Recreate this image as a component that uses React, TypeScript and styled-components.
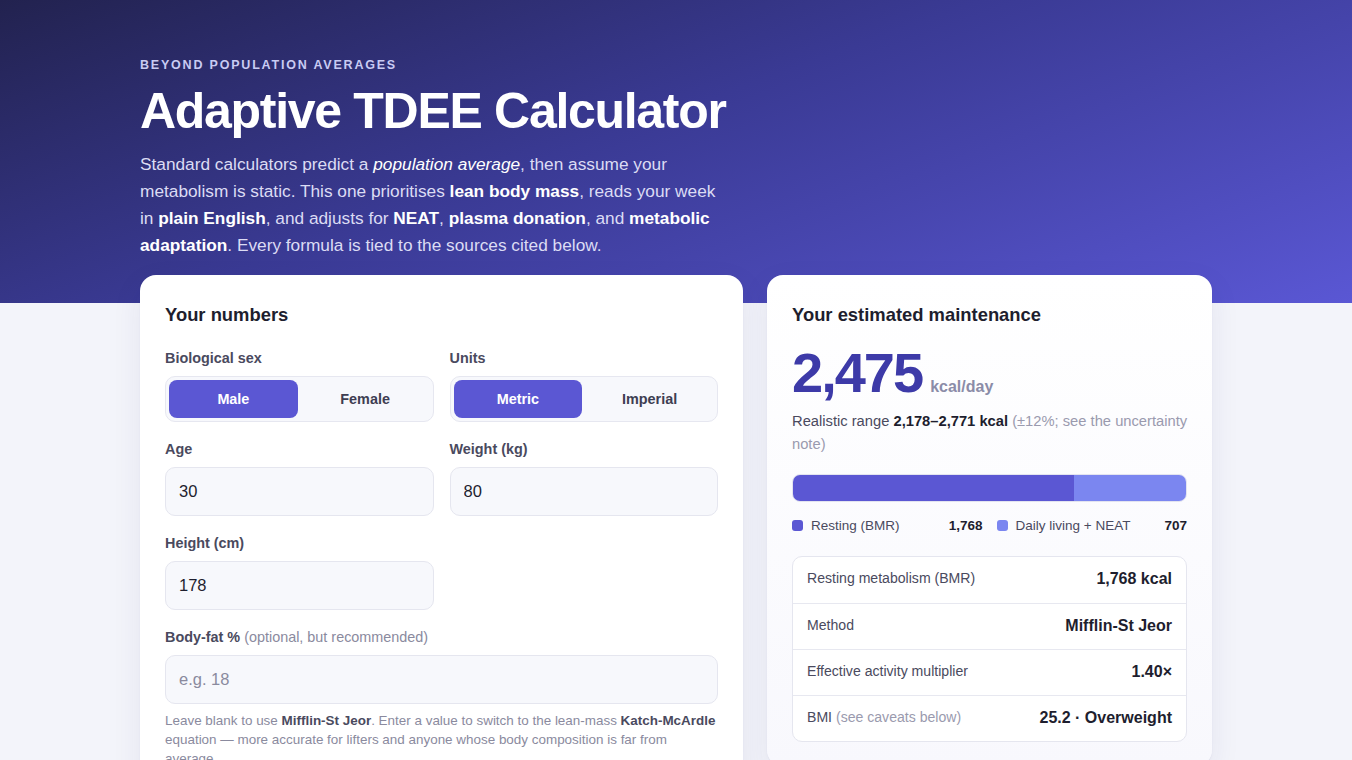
import React from 'react';
import styled, {createGlobalStyle} from 'styled-components';

const GlobalStyle = createGlobalStyle`
  html, body {
    margin: 0;
    padding: 0;
    background: #f3f4fa;
    font-family: "Liberation Sans", Arial, sans-serif;
    color: #1e1e2e;
  }
  * { box-sizing: border-box; }
`

const Hero = styled.header`
  background: linear-gradient(160deg, #22224f 0%, #3a3a94 45%, #5a57d4 100%);
  padding: 58px 0 44px;
`

const Container = styled.div`
  max-width: 1072px;
  margin: 0 auto;
`

const Eyebrow = styled.div`
  font-size: 12.5px;
  line-height: 15px;
  font-weight: 700;
  letter-spacing: 1.8px;
  text-transform: uppercase;
  color: #c9cbf3;
`

const Title = styled.h1`
  margin: 10px 0 12px;
  font-size: 50px;
  line-height: 56px;
  font-weight: 700;
  letter-spacing: -1.3px;
  color: #ffffff;
`

const Lead = styled.p`
  margin: 0;
  max-width: 585px;
  font-size: 17.28px;
  line-height: 27px;
  color: #dcdcf4;

  b { color: #ffffff; }
  em { color: #ffffff; }
`

const Columns = styled(Container)`
  display: grid;
  grid-template-columns: 603px 445px;
  gap: 24px;
  margin-top: -28px;
  align-items: start;
`

const Card = styled.section<{ $tint?: boolean }>`
  background: ${(p) => p.$tint ? "linear-gradient(180deg, #ffffff 0%, #f8f8fd 100%)" : "#ffffff"};
  border-radius: 16px;
  padding: 27px 25px 24px;
  box-shadow: 0 10px 30px rgba(40, 40, 110, 0.08), 0 1px 2px rgba(40, 40, 110, 0.06);
`

const CardTitle = styled.h2`
  margin: 0 0 20px;
  font-size: 18.4px;
  line-height: 26px;
  font-weight: 700;
  color: #1e1e2e;
`

const FieldGrid = styled.div`
  display: grid;
  grid-template-columns: 1fr 1fr;
  column-gap: 16px;
  row-gap: 17px;
`

const Field = styled.div<{ $wide?: boolean }>`
  display: flex;
  flex-direction: column;
  gap: 8px;
  grid-column: ${(p) => p.$wide ? "1 / -1" : "auto"};
`

const Label = styled.label`
  font-size: 14.4px;
  line-height: 20px;
  font-weight: 700;
  color: #4a4a5e;

  span {
    font-weight: 400;
    color: #8a8a9e;
  }
`

const Segmented = styled.div`
  display: grid;
  grid-template-columns: 1fr 1fr;
  gap: 3px;
  padding: 3px;
  height: 46px;
  background: #f7f8fc;
  border: 1px solid #e6e7f0;
  border-radius: 10px;
`

const SegButton = styled.button<{ $active?: boolean }>`
  border: none;
  border-radius: 8px;
  font-family: inherit;
  font-size: 14.4px;
  font-weight: 700;
  background: ${(p) => p.$active ? "#5b57d3" : "transparent"};
  color: ${(p) => p.$active ? "#ffffff" : "#3e3e52"};
`

const Input = styled.input`
  height: 49px;
  width: 100%;
  padding: 0 13px;
  background: #f7f8fc;
  border: 1px solid #e5e6ef;
  border-radius: 10px;
  font-family: inherit;
  font-size: 16.5px;
  color: #1e1e2e;
  outline: none;

  &::placeholder { color: #8a8a9e; }
`

const Help = styled.p`
  margin: -1px 0 0;
  font-size: 13.44px;
  line-height: 19px;
  color: #8a8a9e;

  b { color: #4a4a5e; }
`

const Big = styled.div`
  display: flex;
  align-items: baseline;
  gap: 8px;
  margin-top: -3px;
`

const BigNumber = styled.span`
  font-size: 56px;
  line-height: 56px;
  font-weight: 700;
  letter-spacing: -2px;
  color: #3d3aa8;
`

const BigUnit = styled.span`
  font-size: 16px;
  font-weight: 700;
  color: #8b8ca8;
`

const Range = styled.p`
  margin: 9px -4px 18px 0;
  font-size: 14.72px;
  line-height: 23px;
  color: #4a4a5e;

  b { color: #1e1e2e; }
  span { color: #9a9aae; }
`

const Bar = styled.div`
  display: flex;
  height: 28px;
  border: 1px solid #e3e4f0;
  border-radius: 8px;
  overflow: hidden;
  background: #eef0fa;
`

const BarPart = styled.div<{ $color: string }>`
  height: 100%;
  background: ${(p) => p.$color};
`

const Legend = styled.div`
  display: grid;
  grid-template-columns: 1fr 1fr;
  gap: 14px;
  margin: 15px 0 22px;
`

const LegendItem = styled.div`
  display: flex;
  align-items: center;
  font-size: 13.5px;
  line-height: 17px;
  color: #4a4a5e;

  b {
    margin-left: auto;
    color: #1e1e2e;
  }
`

const Swatch = styled.i<{ $color: string }>`
  width: 11px;
  height: 11px;
  border-radius: 3px;
  margin-right: 8px;
  background: ${(p) => p.$color};
`

const Table = styled.div`
  background: #ffffff;
  border: 1px solid #e5e6ef;
  border-radius: 10px;
`

const Row = styled.div`
  display: flex;
  justify-content: space-between;
  align-items: flex-start;
  height: 46px;
  padding: 12px 14px 0;
  border-top: 1px solid #e7e8f0;

  &:first-child { border-top: none; }
`

const RowLabel = styled.span`
  font-size: 14.08px;
  line-height: 18px;
  color: #4a4a5e;

  span { color: #9a9aae; }
`

const RowValue = styled.span`
  font-size: 16px;
  line-height: 20px;
  font-weight: 700;
  color: #1e1e2e;
`

const BMR = 1768;
const NEAT = 707;

export default function App() {
    const total = BMR + NEAT;
    return (
        <>
            <GlobalStyle/>
            <Hero>
                <Container>
                    <Eyebrow>Beyond population averages</Eyebrow>
                    <Title>Adaptive TDEE Calculator</Title>
                    <Lead>
                        Standard calculators predict a <em>population average</em>, then assume your metabolism is
                        static. This one prioritises <b>lean body mass</b>, reads your week in <b>plain English</b>,
                        and adjusts for <b>NEAT</b>, <b>plasma donation</b>, and <b>metabolic adaptation</b>. Every
                        formula is tied to the sources cited below.
                    </Lead>
                </Container>
            </Hero>

            <Columns>
                <Card>
                    <CardTitle>Your numbers</CardTitle>
                    <FieldGrid>
                        <Field>
                            <Label>Biological sex</Label>
                            <Segmented>
                                <SegButton $active>Male</SegButton>
                                <SegButton>Female</SegButton>
                            </Segmented>
                        </Field>
                        <Field>
                            <Label>Units</Label>
                            <Segmented>
                                <SegButton $active>Metric</SegButton>
                                <SegButton>Imperial</SegButton>
                            </Segmented>
                        </Field>
                        <Field>
                            <Label>Age</Label>
                            <Input defaultValue="30"/>
                        </Field>
                        <Field>
                            <Label>Weight (kg)</Label>
                            <Input defaultValue="80"/>
                        </Field>
                        <Field>
                            <Label>Height (cm)</Label>
                            <Input defaultValue="178"/>
                        </Field>
                        <div/>
                        <Field $wide>
                            <Label>Body-fat % <span>(optional, but recommended)</span></Label>
                            <Input placeholder="e.g. 18"/>
                            <Help>
                                Leave blank to use <b>Mifflin-St Jeor</b>. Enter a value to switch to the lean-mass{" "}
                                <b>Katch-McArdle</b> equation — more accurate for lifters and anyone whose body
                                composition is far from average.
                            </Help>
                        </Field>
                    </FieldGrid>
                </Card>

                <Card $tint>
                    <CardTitle>Your estimated maintenance</CardTitle>
                    <Big>
                        <BigNumber>{total.toLocaleString("en-US")}</BigNumber>
                        <BigUnit>kcal/day</BigUnit>
                    </Big>
                    <Range>
                        Realistic range <b>2,178–2,771 kcal</b> <span>(±12%; see the uncertainty note)</span>
                    </Range>
                    <Bar>
                        <BarPart $color="#5b57d3" style={{width: `${(BMR / total) * 100}%`}}/>
                        <BarPart $color="#7b86f0" style={{width: `${(NEAT / total) * 100}%`}}/>
                    </Bar>
                    <Legend>
                        <LegendItem><Swatch $color="#5b57d3"/>Resting (BMR)<b>1,768</b></LegendItem>
                        <LegendItem><Swatch $color="#7b86f0"/>Daily living + NEAT<b>707</b></LegendItem>
                    </Legend>
                    <Table>
                        <Row><RowLabel>Resting metabolism (BMR)</RowLabel><RowValue>1,768 kcal</RowValue></Row>
                        <Row><RowLabel>Method</RowLabel><RowValue>Mifflin-St Jeor</RowValue></Row>
                        <Row><RowLabel>Effective activity multiplier</RowLabel><RowValue>1.40×</RowValue></Row>
                        <Row><RowLabel>BMI <span>(see caveats below)</span></RowLabel><RowValue>25.2 · Overweight</RowValue></Row>
                    </Table>
                </Card>
            </Columns>
        </>
    );
}
